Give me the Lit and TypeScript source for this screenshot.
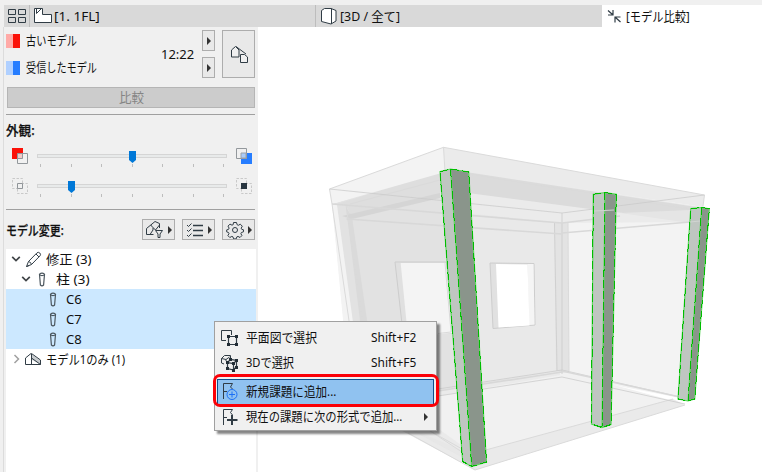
import { LitElement, html, css, svg } from "lit";
import { customElement, property } from "lit/decorators.js";

const glyphs: Record<string, [number, number, unknown]> = {
  grid: [20, 16, svg`<path d="M1.5 1.5h7v5h-7zM11.500 1.500h7v5h-7zM1.500 9.500h7v5h-7zM11.500 9.500h7v5h-7z"/>`],
  plan: [20, 16, svg`<path d="M1.500 14.500V.5H9.500V6.500H18.500V14.500Z" fill="#fff"/><path d="M3.500 .5V5.500L8.500 .5"/>`],
  box: [17, 18, svg`<path d="M1.500 3.500L4.500 1.500H11L16 3.500V14L11 17L1.500 14.500Z" fill="#fff"/><path d="M11.500 1.500V17"/>`],
  converge: [14, 14, svg`<path d="M1 1.500L5.500 5.500M6 1V6H1M13.500 13L8.500 8.500M8 13.500V8H13.500" stroke-width="1.200"/>`],
  houses: [18, 18, svg`<path d="M1.500 12V5L5.500 1.500L9 5V12ZM6 1.500L16 9M10.500 9.500H14.500L17.500 12V17.500H10.500Z" fill="#f0f0f0"/>`],
  redBox: [17, 17, svg`<path d="M1 1h11v11H1z" fill="#fb1108" stroke="none"/><path d="M6.500 6.500h10v10h-10z" fill="#f0f0f0" fill-opacity=".82" stroke="#93989c"/><path d="M6.500 11.500H11.500V6.500" stroke="#93989c"/>`],
  blueBox: [17, 17, svg`<path d="M6 6h11v11H6z" fill="#267dff" stroke="none"/><path d="M1.500 1.500h10v10h-10z" fill="#f0f0f0" stroke="#93989c"/><path d="M6 6h5v5H6z" fill="#a9cbf9" stroke="#9aa2aa"/>`],
  dashA: [17, 17, svg`<path d="M1.500 1.500h10v10h-10zM6.500 6.500h10v10h-10z" stroke="#c9c9c9" stroke-dasharray="2.500 1.500"/><path d="M6.500 6.500h5v5h-5z" fill="#f0f0f0" stroke="#909599"/>`],
  dashB: [17, 17, svg`<path d="M1.500 1.500h10v10h-10zM6.500 6.500h10v10h-10z" stroke="#c9c9c9" stroke-dasharray="2.500 1.500"/><path d="M6 6h6v6H6z" fill="#283540" stroke="none"/>`],
  houseFilter: [19, 19, svg`<path d="M1.500 8.500L10 1.500L14.500 3.500V8M1.500 8.500V14.500H8.500M6.500 6L10.500 10L14.500 5M6 6L6.500 4.500M8 8V10L5 14.500"/><path d="M10.500 10.500H17.500L15 14V17.500H13V14Z"/>`],
  checks: [18, 16, svg`<path d="M1 3L2.500 4.500L5.500 1.500M1 8L2.500 9.500L5.500 6.500M1 13L2.500 14.500L5.500 11.500"/><path d="M7 3.500H17M7 8.500H17M7 13.500H17" stroke-width="1.300"/>`],
  gear: [18, 18, svg`<path d="M7.500 1.500h3l.6 2.200 1.200.6 2-1.100 2 2-1.100 2 .6 1.200 1.700.4v2l-2.100.7-.5 1.100 1 2-1.900 1.900-2-1.100-1.200.5-.6 2H7.600l-.6-2-1.200-.5-2 1.100-1.900-1.900 1.100-2-.5-1.100-1.800-.6v-2l1.900-.6.5-1.200-1.100-2 2-2 2 1.100 1.200-.6z"/><circle cx="9" cy="9" r="2.500"/>`],
  down: [10, 8, svg`<path d="M1.200 1.800L5 5.600L8.800 1.800" stroke="#404548" stroke-width="1.700"/>`],
  right: [10, 10, svg`<path d="M3.500 1L7.500 5L3.500 9" stroke="#a0a0a0" stroke-width="1.500"/>`],
  pencil: [17, 17, svg`<path d="M1.500 15.500L3.500 10.500L12 1.800Q13.500.8 14.800 2Q16.200 3.500 15 4.800L6.500 13.500ZM3.500 10.500Q6 11 6.500 13.500M11 3L14 6M1.500 15.500L4 14.500"/>`],
  column: [8, 15, svg`<path d="M1.500 2.200Q4 .2 6.500 2.200L5.600 13Q4 14.600 2.400 13ZM1.500 2.600Q4 4.600 6.500 2.600" stroke="#4b565e" stroke-width="1.200"/>`],
  house: [18, 14, svg`<path d="M8 2.500L16 8V12L8 8Z" fill="#c9cdd0" stroke="none"/><path d="M7 1.500L1.500 6V12.500H16.500V8L7.500 1.500V12.500M7.500 6L16.500 12.500"/>`],
  select2d: [19, 18, svg`<path d="M11.500 6V1.500H1.500V11.500H6"/><path d="M8.500 7.500H16.500V15.500H8.500Z" stroke-width="1.200"/><path d="M7 6h3v3H7zM15 6h3v3h-3zM7 14h3v3H7zM15 14h3v3h-3z" fill="#222d36" stroke="none"/>`],
  select3d: [19, 18, svg`<path d="M1.500 9V4.500L4.500 1.500H10.500V4M1.500 4.500L6 5.500L9.500 3M6 5.500V7M1.500 9L4 10"/><path d="M7.500 8.500L10.500 5.500L16.500 6.500L13.500 9.500ZM7.500 8.500V14.500L13.500 16V9.500M13.500 16L16.500 12.500V6.500" stroke-width="1.200"/><path d="M6 7h3v3H6zM12 8h3v3h-3zM15 5h3v3h-3zM6 13h3v3H6zM12 15h3v3h-3zM15 12h3v3h-3zM9 4h3v3H9z" fill="#222d36" stroke="none"/>`],
  issueNew: [18, 19, svg`<path d="M2.500 17V1.500H11.500L9.500 5L11.500 7M2.500 9.500H6"/><circle cx="11" cy="12.500" r="5" stroke="#1c70f5"/><path d="M11 9.500V15.500M8 12.500H14" stroke="#1c70f5"/>`],
  issueAdd: [18, 18, svg`<path d="M2.500 17V1.500H11.500L9.500 4.500L11.500 7M2.500 9.500H6"/><path d="M11 7V17M6 12H16.500" stroke-width="2"/>`],
};

const pic = (name: string) => {
  const [w, h, body] = glyphs[name];
  return html`<svg class="pic ${name}" width=${w} height=${h} viewBox="0 0 ${w} ${h}" fill="none" stroke="#303c45">${body}</svg>`;
};

/** Text run condensed or widened to an exact advance width. */
@customElement("fit-label")
class FitLabel extends LitElement {
  @property({ type: Number }) w = 0;
  @property() text = "";
  static styles = css`
    :host { display: block; flex: none; }
    .run { display: inline-block; white-space: pre; transform-origin: 0 50%; }
  `;
  render() {
    return html`<span class="run">${this.text}</span>`;
  }
  updated() {
    const run = this.renderRoot.querySelector<HTMLElement>(".run")!;
    this.style.width = `${this.w}px`;
    run.style.transform = `scaleX(${this.w / run.offsetWidth})`;
  }
}

const label = (text: string, w: number, cls = "") =>
  html`<fit-label class=${cls} .w=${w} .text=${text}></fit-label>`;

@customElement("model-view")
class ModelView extends LitElement {
  static styles = css`
    :host { display: block; overflow: hidden; }
    svg { display: block; }
    .edge { fill: none; stroke: #c9c9c9; stroke-width: 1; opacity: .75; }
    .soft { fill: none; stroke: #dadada; stroke-width: 1; }
    .thick { fill: none; stroke: #d8d8d8; stroke-width: 1.7; }
    .lit { fill: #bfc6c1; }
    .dark { fill: #8a958b; }
    .sel { fill: none; stroke: #5fd65f; stroke-width: 1.2; }
    .dash { fill: none; stroke: #00bd00; stroke-width: 1; stroke-dasharray: 8 3; shape-rendering: crispEdges; }
  `;
  column(l: string, c: string, r: string, lb: string, cb: string, rb: string) {
    const outline = `M${l}L${c}L${r}L${rb}L${cb}L${lb}ZM${c}L${cb}`;
    return svg`
      <path class="lit" d="M${l}L${c}L${cb}L${lb}Z"/>
      <path class="dark" d="M${c}L${r}L${rb}L${cb}Z"/>
      <path class="sel" d=${outline}/><path class="dash" d=${outline}/>`;
  }
  render() {
    return html`<svg width="504" height="445" viewBox="258 27 504 445">
      <path fill="#f3f3f3" d="M332 204L562 213L704 206L680 398L562 375L351 404Z"/>
      <path fill="#e9e9e9" d="M332 204L440 171L562 213V371L361 403Z"/>
      <path fill="#ebebeb" d="M440 171H468L703 207L690 222L562 223L440 210Z"/>
      <path fill="#e2e2e2" d="M332 204L440 171L456 390L361 403Z"/>
      <path fill="#dedede" d="M337 204L440 172V194L352 217L346 205Z"/>
      <path fill="#f3f3f3" d="M332 204L337 205L364 403H352Z"/>
      <path fill="#dadada" d="M346 207L352 217L379 402H370Z"/>
      <path fill="#f1f1f1" d="M361 403L562 371L685 404L475 465Z"/>
      <path fill="#eaeaea" d="M350 403L471 454L673 399L685 405L475 470Z"/>
      <path fill="#e4e4e4" d="M361 403L438 389L560 371V375L438 396L440 430L471 452V462Z" opacity=".5"/>
      <path fill="#e3e3e3" d="M554 223H568L569 372L562 373L556 370Z"/>
      <path fill="#f3f3f3" d="M329.500 189L443.500 147.300L445 172L332 204Z"/>
      <path fill="#ebebeb" d="M443.500 147.300L704.500 195L703 207L468 172H445Z"/>
      <path fill="#dbdbdb" d="M466 172L703 208L690 210L690 221L590 209L468 193Z"/>
      <path fill="#e5e5e5" d="M620 213L690 210L701 211L690 223Z"/>
      <path fill="#d5d5d5" d="M342 216L440 193V198L352 219Z"/>
      <path fill="#e0e0e0" stroke="#cdcdcd" d="M395 262H446L452 333H403Z"/>
      <path fill="#f4f4f4" d="M400.700 263H446L452 333L408 337Z"/>
      <path class="soft" d="M445 263L451 332L438 333.500"/>
      <path fill="#e1e1e1" stroke="#cdcdcd" d="M490 263L534 263.500L535 325L493 328.500Z"/>
      <path fill="#f5f5f5" d="M527.500 264H533.500L534.500 324.500L529 325Z"/>
      <path fill="#fff" d="M496 264L527.500 264.500L529.500 325.500L498.500 327.500Z"/>
      <path class="soft" d="M329.500 189L443.500 147.300L704.500 195L703 206M443.500 147.300L445 172M329.500 189L332 204L361 403M346 205L374 402M350 204L440 180M468 174L690 209M408 433L475 470L685 405M471 454L673 399M400 414L471 454M415 421L471 458"/>
      <path class="edge" d="M329.500 189L562 213L704.500 195M562 213V374M554.500 223L557 371M562 377L438 396M562 377L685 404M438 389L562 370L680 397"/>
      <path class="thick" d="M346.500 219L562 234M332 204L562 223M438 391L562 372M562 371L680 397M562 233L690 222M562 223L620 216"/>
      <path class="soft" d="M568 223L569 371"/>
      ${this.column("440 171.700", "450.500 169", "468.700 172", "462.700 461.500", "471.700 466.500", "486.500 462")}
      ${this.column("593.300 194.300", "605 192.500", "616.300 194.300", "591.500 424", "602 427.500", "611 424.500")}
      ${this.column("690.700 208.700", "701.700 207.500", "709.300 208.700", "678 399", "688 401", "694.700 399")}
      <path d="M594 211L614 210M690 222L700 221" stroke="#d1d5d2"/>
    </svg>`;
  }
}

@customElement("app-root")
class AppRoot extends LitElement {
  static styles = css`
    :host { display: flex; flex-direction: column; position: relative; width: 762px; height: 472px; overflow: hidden;
      background: #fff; color: #101010; font: 13px/20px "Noto Sans", "Noto Sans CJK JP", sans-serif; box-sizing: border-box; }
    * { box-sizing: border-box; }
    fit-label { margin-top: -1px; }
    .pic { display: block; flex: none; }
    .tabs { display: flex; height: 27px; flex: none; padding-left: 4px; background: #f0f0f0; }
    .tab { display: flex; align-items: center; height: 22px; margin-top: 5px; background: #d9d9d9; border-left: 1px solid #bdbdbd; }
    .tab.first { width: 25px; border: 0; padding-left: 3px; }
    .tab.plan { width: 286px; padding-left: 3px; }
    .tab.three { width: 287px; padding-left: 4px; }
    .tab.active { width: 160px; background: #fff; border: 0; padding-left: 5px; }
    .tab.plan fit-label { margin-left: 1px; }
    .tab.three fit-label { margin-left: 3px; }
    .tab.active fit-label { margin-left: 5px; }
    .body { display: flex; flex: 1; min-height: 0; }
    .panel { width: 258px; flex: none; background: #f0f0f0; display: flex; flex-direction: column; padding: 0 2px; border-left: 1px solid #f0f0f0; }
    .inner { border-left: 1px solid #dcdcdc; padding-left: 2px; flex: 1; display: flex; flex-direction: column; }
    .models { display: flex; height: 60px; padding-top: 3px; }
    .names { display: flex; flex-direction: column; gap: 6px; width: 155px; }
    .name { display: flex; align-items: center; height: 21px; gap: 6px; }
    .swatch { width: 14px; height: 14px; }
    .old { background: linear-gradient(90deg, #ffaaa7 50%, #fb1108 50%); }
    .recv { background: linear-gradient(90deg, #b0d0ff 50%, #267dff 50%); }
    .time { width: 41px; align-self: flex-start; padding-top: 15px; }
    .steps { display: flex; flex-direction: column; gap: 6px; width: 13px; margin-right: 7px; }
    .btn { display: flex; align-items: center; justify-content: center; border: 1px solid #adadad; background: #e9e9e9; height: 21px; }
    .big { width: 33px; height: 48px; }
    .tri { width: 0; height: 0; border: 4px solid transparent; border-left: 4px solid #333; border-right: 0; }
    .compare { height: 21px; margin-left: 1px; width: 248px; background: #ccc; border-color: #b5b5b5; color: #858585; }
    .rule { height: 1px; background: #a0a0a0; width: 249px; flex: none; }
    .gap { height: 6px; }
    .gap.small { height: 2px; }
    .heading { height: 31px; margin-bottom: 1px; display: flex; align-items: center; font-weight: 500; -webkit-text-stroke: .25px #101010; }
    .slide { display: flex; height: 30px; padding-left: 5px; }
    .track { width: 190px; height: 4px; border: 1px solid #d5d5d5; background: #e8eaea; margin-top: 5px; }
    .mid { width: 190px; margin: 2px 8px 0 9px; position: relative; }
    .ticks { display: flex; justify-content: space-between; padding: 6px 3px 0; }
    .tick { width: 1px; height: 3px; background: #bdbdbd; }
    .thumb { position: absolute; top: 2px; }
    .t1 { left: 92px; }
    .t2 { left: 31px; }
    .tools { display: flex; height: 39px; align-items: center; }
    .tools .lead { width: 136px; padding-top: 1px; font-weight: 500; -webkit-text-stroke: .25px #101010; }
    .tools .btn { width: 33px; margin-right: 7px; gap: 4px; }
    .tools .btn:last-child { margin-right: 0; }
    .tree { background: #fff; flex: 1; width: 250px; }
    .row { display: flex; align-items: center; height: 20px; }
    .row.on { background: #cce8ff; }
    .d0 { padding-left: 5px; gap: 3px; }
    .pencil { margin: 0 1px; }
    .house { margin-right: 1px; }
    .d1 { padding-left: 15px; gap: 7px; }
    .d1 fit-label { margin-left: 3px; }
    .d2 { padding-left: 43px; gap: 9px; }
    .menu { position: absolute; left: 214px; top: 321px; width: 223px; height: 110px; background: #f0f0f0; border: 1px solid #a0a0a0; box-shadow: 3px 3px 2px rgba(0,0,0,.48); padding: 4px 2px; }
    .item { display: flex; align-items: center; height: 25px; padding-left: 2px; border: 1px solid transparent; }
    .item .pic { margin: -1px 7px 0 0; }
    .item fit-label { margin-top: -3px; }
    .item .w18 { margin-left: 0; }
    .item .issueNew, .item .issueAdd { margin-left: 1px; }
    .key { margin-left: auto; margin-right: 17px; }
    .item .tri { margin: -2px 5px 0 auto; }
    .item.hot { background: #90c2f0; border-color: #0f4f8c; margin-top: 3px; height: 26px; }
    .ring { position: absolute; left: 213px; top: 374px; width: 226px; height: 33px; border: 3px solid #fb0007; border-radius: 7px; }
  `;

  slider(a: string, b: string, cls: string) {
    return html`<div class="slide">${pic(a)}
      <div class="mid"><div class="track"></div>
        <div class="ticks">${[0, 1, 2, 3, 4, 5, 6].map(() => html`<div class="tick"></div>`)}</div>
        <svg class="thumb ${cls}" width="7" height="12"><path d="M0 0H7V9L3.500 12L0 9Z" fill="#0078d7"/></svg>
      </div>${pic(b)}</div>`;
  }

  render() {
    const tri = html`<div class="tri"></div>`;
    return html`
      <div class="tabs">
        <div class="tab first">${pic("grid")}</div>
        <div class="tab plan">${pic("plan")}${label("[1. 1FL]", 46)}</div>
        <div class="tab three">${pic("box")}${label("[3D / 全て]", 60)}</div>
        <div class="tab active">${pic("converge")}${label("[モデル比較]", 64)}</div>
      </div>
      <div class="body">
        <div class="panel"><div class="inner">
          <div class="models">
            <div class="names">
              <div class="name"><div class="swatch old"></div>${label("古いモデル", 51)}</div>
              <div class="name"><div class="swatch recv"></div>${label("受信したモデル", 71)}</div>
            </div>
            <div class="time">${label("12:22", 33)}</div>
            <div class="steps"><div class="btn">${tri}</div><div class="btn">${tri}</div></div>
            <div class="btn big">${pic("houses")}</div>
          </div>
          <div class="btn compare">${label("比較", 25)}</div>
          <div class="gap"></div>
          <div class="rule"></div>
          <div class="heading">${label("外観:", 29)}</div>
          ${this.slider("redBox", "blueBox", "t1")}
          ${this.slider("dashA", "dashB", "t2")}
          <div class="gap small"></div>
          <div class="rule"></div>
          <div class="tools">
            <div class="lead">${label("モデル変更:", 58)}</div>
            <div class="btn">${pic("houseFilter")}${tri}</div>
            <div class="btn">${pic("checks")}${tri}</div>
            <div class="btn">${pic("gear")}${tri}</div>
          </div>
          <div class="tree">
            <div class="row d0">${pic("down")}${pic("pencil")}${label("修正 (3)", 46)}</div>
            <div class="row d1">${pic("down")}${pic("column")}${label("柱 (3)", 34)}</div>
            ${["C6", "C7", "C8"].map((c) => html`<div class="row d2 on">${pic("column")}${label(c, 16)}</div>`)}
            <div class="row d0">${pic("right")}${pic("house")}${label("モデル1のみ (1)", 79)}</div>
          </div>
        </div></div>
        <model-view></model-view>
      </div>
      <div class="menu">
        <div class="item">${pic("select2d")}${label("平面図で選択", 71)}${label("Shift+F2", 45, "key")}</div>
        <div class="item">${pic("select3d")}${label("3Dで選択", 48)}${label("Shift+F5", 45, "key")}</div>
        <div class="item hot">${pic("issueNew")}${label("新規課題に追加...", 90, "w18")}</div>
        <div class="item">${pic("issueAdd")}${label("現在の課題に次の形式で追加...", 156, "w18")}${tri}</div>
      </div>
      <div class="ring"></div>
    `;
  }
}
